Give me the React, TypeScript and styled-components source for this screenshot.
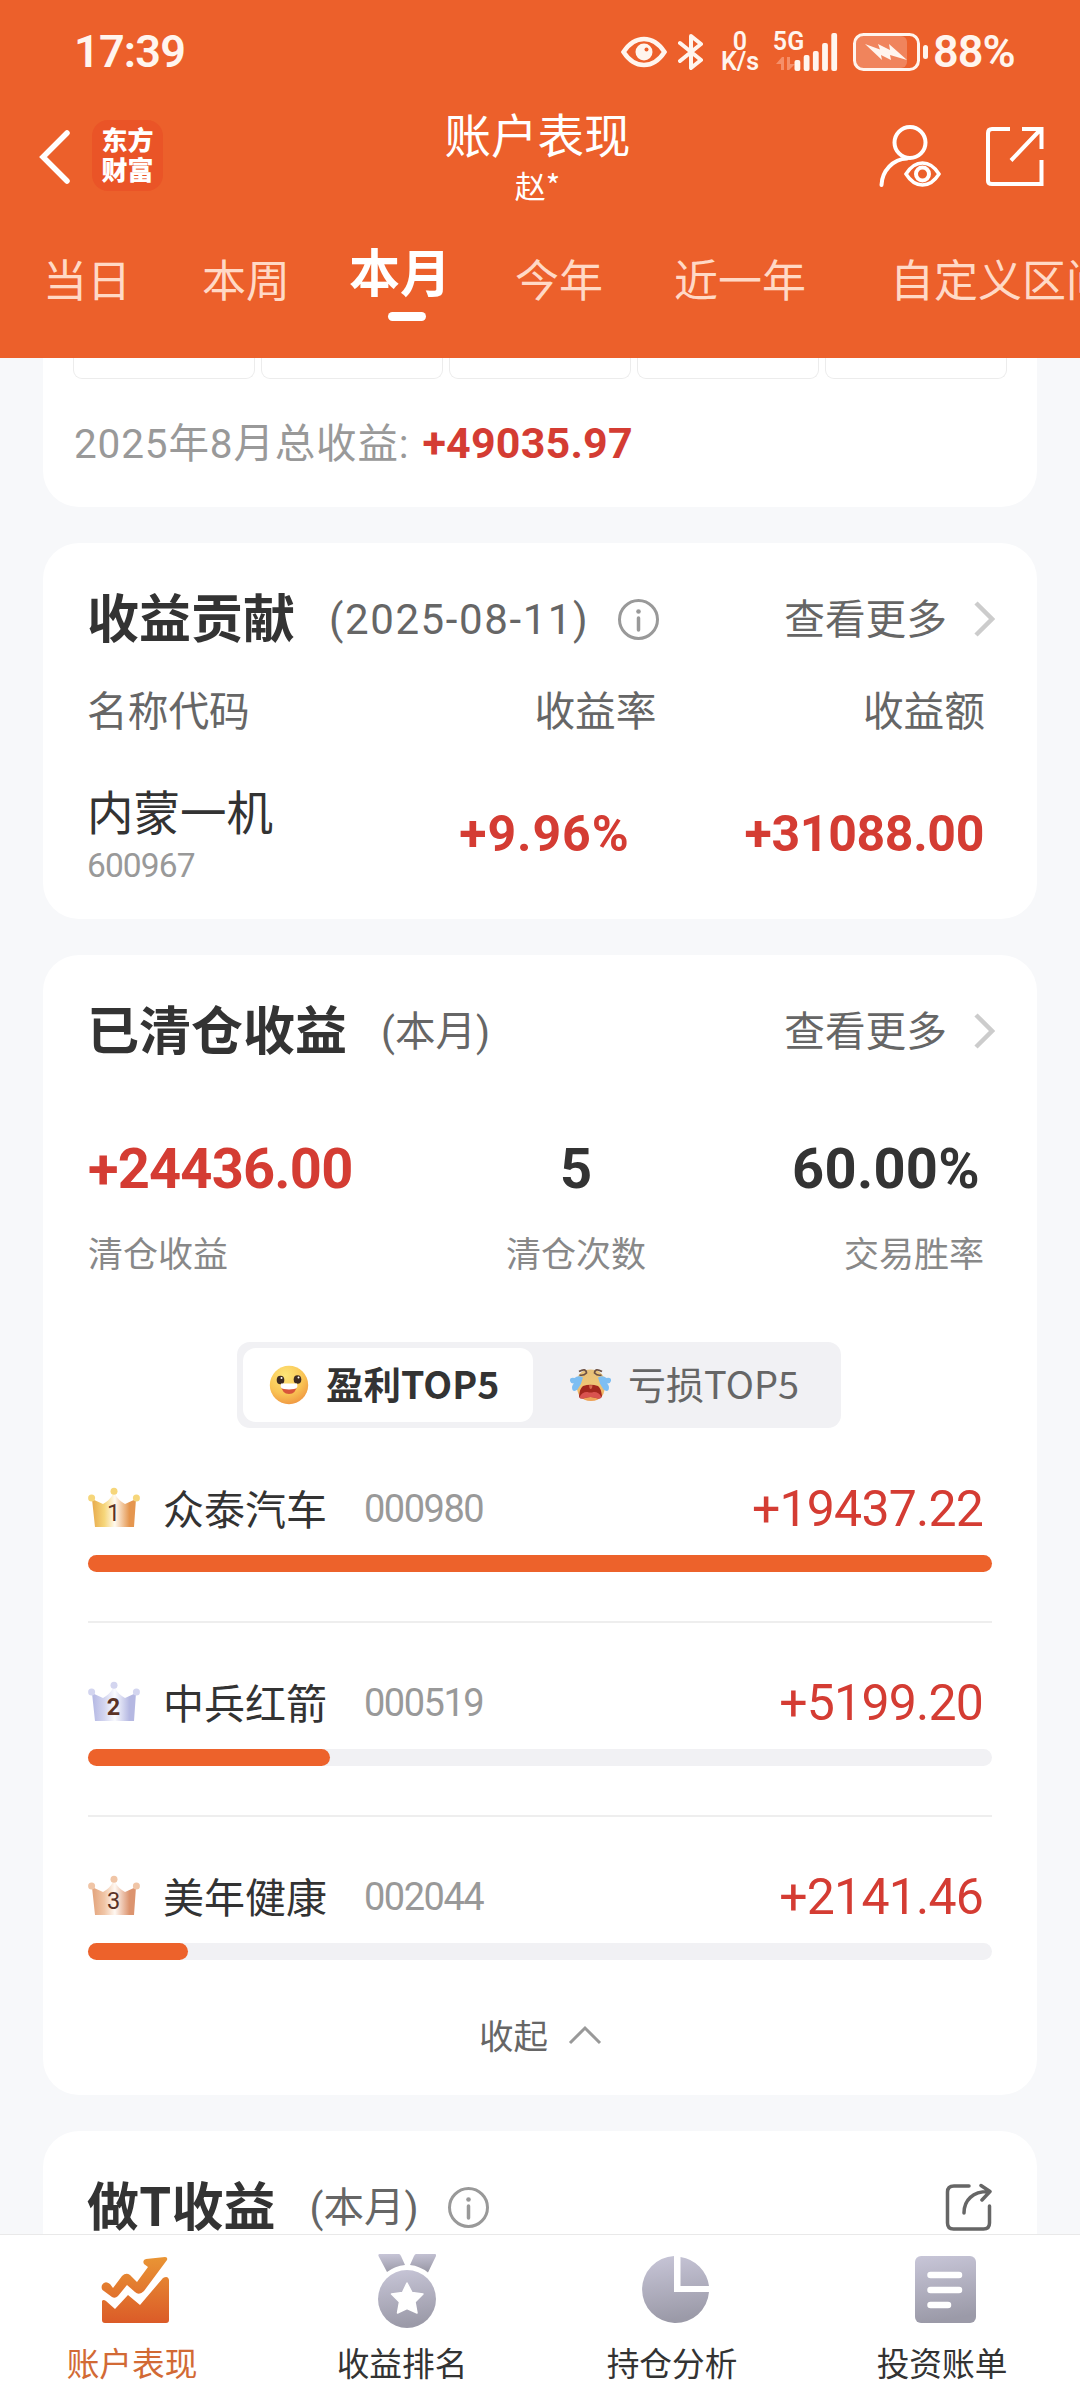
import React from "react";
import styled, { createGlobalStyle } from "styled-components";

const CJK = `"Noto Sans CJK SC", sans-serif`;
const NUM = `Roboto, "Noto Sans CJK SC", sans-serif`;
const ORANGE = "#ec602b";
const RED = "#d43c33";

const GlobalStyle = createGlobalStyle`
  * { box-sizing: border-box; }
  body { margin: 0; background: #f7f8fa; font-family: ${CJK}; }
  svg { display: block; flex: none; }
`;

const Screen = styled.div`
  width: 1080px;
  height: 2400px;
  overflow: hidden;
  display: flex;
  flex-direction: column;
  background: #f7f8fa;
`;

/* ---------- header ---------- */

const Header = styled.header`
  height: 358px;
  flex: none;
  background: ${ORANGE};
  color: #fff;
  overflow: hidden;
`;

const StatusBar = styled.div`
  height: 103px;
  display: flex;
  align-items: center;
  padding: 0 66px 0 74px;
  color: #fff5ee;
  font-family: ${NUM};
  font-weight: 600;
`;

const Clock = styled.span`
  font-size: 45px;
  line-height: 52px;
  letter-spacing: -0.8px;
  margin-right: auto;
`;

const StackedLabel = styled.div<{ $ml: number; $w: number }>`
  display: flex;
  flex-direction: column;
  align-items: center;
  width: ${(p) => p.$w}px;
  margin-left: ${(p) => p.$ml}px;
  font-size: 25px;
  line-height: 20px;
  white-space: nowrap;
`;

const BatteryText = styled.span`
  font-size: 45px;
  line-height: 52px;
  letter-spacing: -1px;
  margin-left: 4px;
  width: 81px;
  white-space: nowrap;
`;

const TitleBar = styled.div`
  height: 108px;
  display: grid;
  grid-template-columns: 400px 275px 1fr;
  align-items: center;
`;

const TitleLeft = styled.div`
  display: flex;
  align-items: center;
  gap: 22px;
  padding-left: 39px;
`;

const AppLogo = styled.div`
  width: 71px;
  height: 71px;
  margin-top: -3px;
  border-radius: 16px;
  background: #ea5427;
  display: flex;
  flex-direction: column;
  align-items: center;
  justify-content: center;
  font-size: 26px;
  font-weight: 900;
  line-height: 30px;
  padding-bottom: 3px;
`;

const TitleCenter = styled.div`
  display: flex;
  flex-direction: column;
  align-items: center;
`;

const PageTitle = styled.h1`
  margin: -2px 0 0;
  font-size: 46.5px;
  font-weight: 400;
  line-height: 58px;
`;

const Owner = styled.div`
  font-size: 31px;
  line-height: 46px;
`;

const TitleRight = styled.div`
  display: flex;
  align-items: center;
  justify-content: flex-end;
  gap: 45px;
  padding: 0 36px 2px 0;
`;

const Tabs = styled.nav`
  height: 147px;
  display: flex;
  align-items: flex-start;
  white-space: nowrap;
`;

const Tab = styled.div<{ $ml: number; $active?: boolean }>`
  flex: none;
  display: flex;
  flex-direction: column;
  align-items: center;
  margin-left: ${(p) => p.$ml}px;
  padding-top: ${(p) => (p.$active ? 27 : 35)}px;
  font-size: ${(p) => (p.$active ? 51 : 44)}px;
  line-height: 64px;
  font-weight: ${(p) => (p.$active ? 700 : 400)};
  color: ${(p) => (p.$active ? "#fff" : "#ffd9c6")};
`;

const TabMark = styled.span`
  width: 38px;
  height: 9px;
  margin: 10px 0 0 14px;
  border-radius: 5px;
  background: #fff;
`;

/* ---------- cards ---------- */

const Content = styled.main`
  height: 1876px;
  flex: none;
  overflow: hidden;
  padding: 0 43px;
  display: flex;
  flex-direction: column;
  gap: 36px;
`;

const Card = styled.section<{ $h: number; $open?: boolean }>`
  flex: none;
  height: ${(p) => p.$h}px;
  background: #fff;
  border-radius: ${(p) => (p.$open ? "0 0 36px 36px" : "36px")};
  padding: ${(p) => (p.$open ? "0 30px" : "36px 45px 0")};
`;

const DayCells = styled.div`
  display: grid;
  grid-template-columns: repeat(5, 182px);
  gap: 6px;
`;

const DayCell = styled.div`
  height: 21px;
  border: 1px solid #ececec;
  border-top: 0;
  border-radius: 0 0 9px 9px;
`;

const TotalLine = styled.div`
  display: flex;
  align-items: center;
  height: 60px;
  margin-top: 35px;
  padding-left: 1px;
  gap: 13px;
`;

const TotalLabel = styled.span`
  font-size: 40.5px;
  letter-spacing: 0.85px;
  line-height: 60px;
  color: #999;
  font-family: ${NUM};
`;

const Num = styled.span<{ $size: number; $ls?: number; $bold?: boolean; $color?: string }>`
  font-family: ${NUM};
  font-size: ${(p) => p.$size}px;
  letter-spacing: ${(p) => p.$ls ?? 0}px;
  font-weight: ${(p) => (p.$bold ? 700 : 400)};
  color: ${(p) => p.$color ?? "#333"};
  line-height: 1.2;
  white-space: nowrap;
`;

const CardHead = styled.div`
  display: flex;
  align-items: center;
  height: 80px;
`;

const CardTitle = styled.h2`
  margin: -6px 0 0 -1px;
  font-size: 52px;
  font-weight: 700;
  line-height: 76px;
  color: #333;
  white-space: nowrap;
`;

const Period = styled.span<{ $size?: number; $ls?: number }>`
  margin: 2px 0 0 34px;
  font-family: ${NUM};
  font-size: ${(p) => p.$size ?? 42}px;
  letter-spacing: ${(p) => p.$ls ?? 0}px;
  line-height: 76px;
  color: #666;
  white-space: nowrap;
`;

const IconSlot = styled.span<{ $ml: number | "auto" }>`
  margin-left: ${(p) => (p.$ml === "auto" ? "auto" : `${p.$ml}px`)};
`;

const More = styled.span`
  margin-left: auto;
  display: flex;
  align-items: center;
  gap: 26px;
  font-size: 40.7px;
  line-height: 68px;
  color: #666;
`;

const MoreText = styled.span`
  margin-top: -4px;
`;

const TableRow = styled.div<{ $h: number; $mt: number }>`
  display: grid;
  grid-template-columns: 300px 1fr 1fr;
  align-items: center;
  height: ${(p) => p.$h}px;
  margin: ${(p) => p.$mt}px 0 0 -1px;
`;

const HeadCell = styled.div<{ $pr?: number; $right?: boolean }>`
  font-size: 40.7px;
  line-height: 60px;
  color: #666;
  text-align: ${(p) => (p.$right ? "right" : "left")};
  padding-right: ${(p) => p.$pr ?? 0}px;
`;

const ValueCell = styled.div<{ $pr: number }>`
  text-align: right;
  padding-right: ${(p) => p.$pr}px;
`;

const StockCell = styled.div`
  display: flex;
  flex-direction: column;
  gap: 8px;
`;

const StockName = styled.span<{ $size: number }>`
  font-size: ${(p) => p.$size}px;
  line-height: 56px;
  color: #333;
  white-space: nowrap;
`;

const Stats = styled.div`
  display: grid;
  grid-template-columns: 320px 1fr 240px;
  height: 142px;
  margin-top: 65px;
  padding-right: 8px;
`;

const Stat = styled.div<{ $align: string }>`
  display: flex;
  flex-direction: column;
  align-items: ${(p) => p.$align};
  gap: 24px;
  white-space: nowrap;
`;

const StatLabel = styled.span`
  font-size: 35px;
  line-height: 50px;
  color: #888;
`;

const Segmented = styled.div`
  display: flex;
  width: 604px;
  height: 86px;
  margin: 64px 0 0 149px;
  padding: 6px;
  border-radius: 13px;
  background: #f1f1f4;
`;

const Segment = styled.div<{ $active?: boolean; $gap: number; $pl: number }>`
  width: 290px;
  height: 74px;
  display: flex;
  align-items: center;
  gap: ${(p) => p.$gap}px;
  padding-left: ${(p) => p.$pl}px;
  border-radius: 13px;
  background: ${(p) => (p.$active ? "#fff" : "transparent")};
  color: ${(p) => (p.$active ? "#333" : "#666")};
  font-weight: ${(p) => (p.$active ? 700 : 400)};
  font-size: ${(p) => (p.$active ? 37.5 : 38)}px;
  line-height: 66px;
  white-space: nowrap;
`;

const SegmentText = styled.span`
  margin-top: -4px;
`;

const RankList = styled.div`
  padding-top: 49px;
`;

const RankItem = styled.div<{ $first: boolean }>`
  height: ${(p) => (p.$first ? 144 : 194)}px;
  padding-top: ${(p) => (p.$first ? 0 : 48)}px;
  border-top: ${(p) => (p.$first ? "none" : "2px solid #eee")};
`;

const RankRow = styled.div`
  display: flex;
  align-items: center;
  height: 60px;
`;

const RankName = styled(StockName)`
  margin-left: 23px;
  margin-right: 37px;
`;

const RankCode = styled(Num)`
  margin-top: 5px;
`;

const RankAmount = styled(Num)`
  margin: 4px 9px 0 auto;
`;

const Track = styled.div`
  height: 17px;
  margin-top: 18px;
  border-radius: 9px;
  background: #f1f1f4;
`;

const TrackFill = styled.div`
  height: 17px;
  border-radius: 9px;
  background: #ed622b;
`;

const Collapse = styled.div`
  display: flex;
  align-items: center;
  gap: 20px;
  padding-left: 391px;
  font-size: 34.5px;
  line-height: 50px;
  color: #666;
`;

/* ---------- bottom navigation ---------- */

const BottomNav = styled.footer`
  flex: none;
  height: 166px;
  border-top: 1px solid #e9e9e9;
  background: #fff;
  display: grid;
  grid-template-columns: repeat(4, 270px);
`;

const NavItem = styled.div<{ $active?: boolean }>`
  display: flex;
  flex-direction: column;
  align-items: center;
  padding-top: 18px;
  color: ${(p) => (p.$active ? "#d26a35" : "#333")};
`;

const NavLabel = styled.span`
  margin: 7px 6px 0 0;
  font-size: 32.7px;
  line-height: 48px;
`;

/* ---------- icons ---------- */

const EyeIcon = () => (
  <svg width="46" height="32" viewBox="0 0 46 32">
    <path d="M2.500 16C9 6 16 3 23 3s14 3 20.500 13C37 26 30 29 23 29S9 26 2.500 16Z" fill="none" stroke="#fff5ee" strokeWidth="4.500" />
    <circle cx="23" cy="16" r="8.500" fill="#fff5ee" />
    <circle cx="25.500" cy="13.500" r="2" fill={ORANGE} />
  </svg>
);

const BluetoothIcon = () => (
  <svg width="26" height="38" viewBox="0 0 26 38" style={{ marginLeft: 11 }}>
    <path d="M2 10 23 27 13 35V3l10 8L2 28" fill="none" stroke="#fff5ee" strokeWidth="4" strokeLinejoin="round" strokeLinecap="round" />
  </svg>
);

const DataArrows = () => (
  <svg width="20" height="14" viewBox="0 0 20 14" style={{ marginTop: 5, alignSelf: "flex-start" }}>
    <path d="M0 7 6 0h2v13H5V7ZM11 0h3v7h5l-6 6h-2Z" fill="#f58f69" />
  </svg>
);

const SignalBars = () => (
  <svg width="44" height="38" viewBox="0 0 44 38" style={{ marginLeft: -7 }}>
    {[27, 22, 18, 10, 0].map((y, i) => (
      <rect key={i} x={0.5 + i * 9.2} y={y} width="5.800" height={38 - y} rx="2" fill="#fff5ee" />
    ))}
  </svg>
);

const BatteryIcon = () => (
  <svg width="76" height="38" viewBox="0 0 76 38" style={{ marginLeft: 15 }}>
    <rect x="3" y="3" width="51" height="32" rx="6" fill="#f0845c" />
    <rect x="1.500" y="1.500" width="64" height="35" rx="9" fill="none" stroke="#fff5ee" strokeWidth="3" />
    <path d="M12 11 27 16.500 25 11l12 6-1-6 18 16-17-5 1 5-10-5 1 5Z" fill="#fff5ee" />
    <rect x="70" y="12" width="5" height="14" rx="2.500" fill="#fff5ee" />
  </svg>
);

const BackIcon = () => (
  <svg width="31" height="54" viewBox="0 0 31 54">
    <path d="M28 3 4 27l24 24" fill="none" stroke="#fff" strokeWidth="5.500" strokeLinecap="round" strokeLinejoin="miter" />
  </svg>
);

const PersonEyeIcon = () => (
  <svg width="62" height="62" viewBox="0 0 62 62" fill="none" stroke="#fff" strokeWidth="4">
    <circle cx="31" cy="17.500" r="15.500" />
    <path d="M2.500 60C3 46 14 34 28 33.500" strokeLinecap="round" />
    <path d="M27 49C32 41 38 38 43.500 38S55 41 60 49c-5 8-11 11-16.500 11S32 57 27 49Z" strokeWidth="3.500" />
    <circle cx="43.500" cy="49" r="6.500" strokeWidth="4" />
  </svg>
);

const ExportIcon = () => (
  <svg width="58" height="60" viewBox="0 0 58 60" fill="none" stroke="#fff" strokeWidth="4">
    <path d="M24 3H6Q2 3 2 7v48q0 3 4 3h49.500V34" />
    <path d="M36 3h19.500v20M55 3 25 34.500" />
  </svg>
);

const InfoIcon = () => (
  <svg width="41" height="41" viewBox="0 0 41 41">
    <circle cx="20.500" cy="20.500" r="19" fill="none" stroke="#999" strokeWidth="3" />
    <path d="M20.500 19v12" stroke="#999" strokeWidth="3.500" strokeLinecap="round" />
    <circle cx="20.500" cy="12.500" r="2.300" fill="#999" />
  </svg>
);

const ChevronRight = () => (
  <svg width="22" height="36" viewBox="0 0 22 36" style={{ marginRight: -3 }}>
    <path d="M3 2 19 18 3 34" fill="none" stroke="#ccc" strokeWidth="4.500" />
  </svg>
);

const ChevronUp = () => (
  <svg width="34" height="21" viewBox="0 0 34 21">
    <path d="M2 19 17 4l15 15" fill="none" stroke="#999" strokeWidth="3" />
  </svg>
);

const ShareIcon = () => (
  <svg width="47" height="48" viewBox="0 0 47 48" fill="none" stroke="#666" strokeWidth="3.500" strokeLinecap="round" strokeLinejoin="round">
    <path d="M24 3H9Q2.500 3 2.500 9v31q0 6 6 6h30q6 0 6-6V23" />
    <path d="M19 30C19 17 28 8.500 43 8.500M36 2.500l9 6-8 8.500" />
  </svg>
);

const SmileIcon = () => (
  <svg width="40" height="40" viewBox="0 0 40 40">
    <defs>
      <radialGradient id="smile" cx="0.4" cy="0.25" r="0.8">
        <stop offset="0" stopColor="#fde577" />
        <stop offset="0.6" stopColor="#f9c455" />
        <stop offset="1" stopColor="#ef9440" />
      </radialGradient>
    </defs>
    <circle cx="20" cy="20" r="19.200" fill="url(#smile)" />
    <ellipse cx="11.500" cy="15" rx="3.800" ry="4.300" fill="#3d2a21" />
    <ellipse cx="28.500" cy="14.500" rx="3.800" ry="4.300" fill="#3d2a21" />
    <circle cx="12.500" cy="13" r="1" fill="#fff" />
    <circle cx="29.500" cy="12.500" r="1" fill="#fff" />
    <path d="M12 20h16q-1 9-8 9t-8-9Z" fill="#d8553a" />
    <path d="M12 18.500h16q1.500 5-3 5.500-5 .8-10 0-4.500-.5-3-5.500Z" fill="#fff" />
  </svg>
);

const CryIcon = () => (
  <svg width="44" height="34" viewBox="0 0 44 34">
    <defs>
      <linearGradient id="cry" x1="0" y1="0" x2="0" y2="1">
        <stop offset="0" stopColor="#e6c079" />
        <stop offset="0.5" stopColor="#efc676" />
        <stop offset="1" stopColor="#eda055" />
      </linearGradient>
    </defs>
    <path d="M7.500 14Q9 1.500 21.500 1.500T36 14q1 19-14 19T7.500 14Z" fill="url(#cry)" />
    <path d="M10 3.500q7-4 7.500 1.500-3 3-7 2M33 3.500q-7-4-7.500 1.500 3 3 7 2" stroke="#6d5145" strokeWidth="1.700" fill="none" />
    <path d="M14 9.500Q9 7 5.500 10 .5 9 1 13q1 3 4 2.500Q2 18 3.500 22q2 2 5-.5 4-5 5.500-12ZM29 9.500q5-2.500 8.500.5 5-1 4.500 3-1 3-4 2.500 3 2.500 1.500 6.500-2 2-5-.5-4-5-5.500-12Z" fill="#7dbef2" />
    <path d="M14 18q7.500-2.500 15 0 3 2 4 10-.5 3-4 2.500-7.500-3-15 0-4 .5-4-2.500 1-8 4-10Z" fill="#a3271d" />
    <path d="M10.500 29q3-5.500 8-5 3 1 6 0 5-.5 8 5-1 2-4 1.500-7-3-14 0-3 .5-4-1.500Z" fill="#d9534f" />
    <path d="M20 17.200h3.500L23 20q-1.500 2-2.500 0Z" fill="#d96a50" />
  </svg>
);

const CROWNS = [
  ["#e7aa4c", "#f6d67a", "#fffaf0", "#e5964f"],
  ["#b3b7e3", "#d3d5ef", "#fafbff", "#b5b8e2"],
  ["#e2a27a", "#f0c5a6", "#fff8f2", "#dc946f"],
];

const CrownIcon = ({ rank }: { rank: number }) => {
  const [a, b, c, d] = CROWNS[rank - 1];
  return (
    <svg width="52" height="41" viewBox="0 0 52 41">
      <defs>
        <linearGradient id={`crown${rank}`} x1="0" x2="1" y1="0" y2="0">
          <stop offset="0" stopColor={a} />
          <stop offset="0.28" stopColor={b} />
          <stop offset="0.52" stopColor={c} />
          <stop offset="0.85" stopColor={d} />
          <stop offset="1" stopColor={d} />
        </linearGradient>
      </defs>
      <path d="M4 12 15 17Q22 13 25 7h2q3 6 10 10L48 12 46 40H7Z" fill={`url(#crown${rank})`} />
      <circle cx="3.600" cy="11" r="3.500" fill={b} />
      <circle cx="26" cy="4.200" r="3.500" fill={b} />
      <circle cx="48.400" cy="11" r="3.500" fill={b} />
      <text x="25.500" y="34" textAnchor="middle" fontFamily="Roboto, sans-serif" fontSize="23.500" fontWeight={rank === 2 ? 700 : 400} fill="#5b3327">
        {rank}
      </text>
    </svg>
  );
};

const GreyGradient = ({ id }: { id: string }) => (
  <defs>
    <linearGradient id={id} x1="0" y1="0" x2="0.15" y2="1">
      <stop offset="0" stopColor="#c8c6d8" />
      <stop offset="1" stopColor="#9b9aa8" />
    </linearGradient>
  </defs>
);

const ChartIcon = () => (
  <svg width="68" height="78" viewBox="0 0 68 78">
    <defs>
      <linearGradient id="trend" x1="0" y1="0" x2="0" y2="70" gradientUnits="userSpaceOnUse">
        <stop offset="0" stopColor="#ea9835" />
        <stop offset="1" stopColor="#db5b28" />
      </linearGradient>
    </defs>
    <g fill="url(#trend)">
      <path d="M1.500 37Q0 35 1 32 4 27 9 31l3 4 9-12q4-4 8-1l7 7 11-15-4-3q-2-4 2-5L64 4q3 0 2 3L43 38q-5 5-9 1l-8-7-9 11q-3 3-6 1Z" />
      <path d="M2 47q2 0 3 1l9 8 13-14 12 10L62 25q5-3 6 2v40q0 3-3 3H4q-3 0-3-3V48Z" />
    </g>
  </svg>
);

const MedalIcon = () => (
  <svg width="58" height="78" viewBox="0 0 58 78" style={{ marginLeft: 3 }}>
    <GreyGradient id="medal" />
    <g fill="url(#medal)">
      <path d="M1.500 1H21q1 0 2 2l4 9Q17 13 9 19L.5 3Q0 1 1.500 1ZM38 1h19q1.500 0 1 2l-8 16.500Q42 13 32 12l4-9q1-2 2-2Z" />
      <circle cx="29" cy="46" r="29" />
    </g>
    <path d="m29 30 5 9.500 11 1.500-8 8 2 11-10-4.500L19.500 60l2-11-8-8 11-1.500Z" fill="#fff" stroke="#fff" strokeWidth="1.500" strokeLinejoin="round" />
  </svg>
);

const PieIcon = () => (
  <svg width="68" height="78" viewBox="0 0 68 78" style={{ marginLeft: 2 }}>
    <GreyGradient id="pie" />
    <path d="M32 3v36h35A33.500 33.500 0 1 1 32 3ZM38.500 4A34 34 0 0 1 67 33H38.500Z" fill="url(#pie)" />
  </svg>
);

const BillIcon = () => (
  <svg width="61" height="78" viewBox="0 0 61 78">
    <GreyGradient id="bill" />
    <rect y="3" width="61" height="67" rx="6" fill="url(#bill)" />
    <path d="M15.500 22H44M15.500 37H44M15.500 52H33" stroke="#fff" strokeWidth="6.500" strokeLinecap="round" />
  </svg>
);

/* ---------- data ---------- */

const TABS = [
  { label: "当日", ml: 43 },
  { label: "本周", ml: 71 },
  { label: "本月", ml: 59, active: true },
  { label: "今年", ml: 64 },
  { label: "近一年", ml: 71 },
  { label: "自定义区间", ml: 84 },
];

const RANKS = [
  { name: "众泰汽车", code: "000980", amount: "+19437.22", width: 904, ls: -0.8 },
  { name: "中兵红箭", code: "000519", amount: "+5199.20", width: 242, ls: -0.8 },
  { name: "美年健康", code: "002044", amount: "+2141.46", width: 100, ls: -0.8 },
];

const NAV = [
  { label: "账户表现", icon: <ChartIcon />, active: true },
  { label: "收益排名", icon: <MedalIcon /> },
  { label: "持仓分析", icon: <PieIcon /> },
  { label: "投资账单", icon: <BillIcon /> },
];

const SeeMore = () => (
  <More>
    <MoreText>查看更多</MoreText>
    <ChevronRight />
  </More>
);

export default function App() {
  return (
    <Screen>
      <GlobalStyle />
      <Header>
        <StatusBar>
          <Clock>17:39</Clock>
          <EyeIcon />
          <BluetoothIcon />
          <StackedLabel $ml={16} $w={40}>
            <span>0</span>
            <span>K/s</span>
          </StackedLabel>
          <StackedLabel $ml={16} $w={25}>
            <span>5G</span>
            <DataArrows />
          </StackedLabel>
          <SignalBars />
          <BatteryIcon />
          <BatteryText>88%</BatteryText>
        </StatusBar>
        <TitleBar>
          <TitleLeft>
            <BackIcon />
            <AppLogo>
              <span>东方</span>
              <span>财富</span>
            </AppLogo>
          </TitleLeft>
          <TitleCenter>
            <PageTitle>账户表现</PageTitle>
            <Owner>赵*</Owner>
          </TitleCenter>
          <TitleRight>
            <PersonEyeIcon />
            <ExportIcon />
          </TitleRight>
        </TitleBar>
        <Tabs>
          {TABS.map((t) => (
            <Tab key={t.label} $ml={t.ml} $active={t.active}>
              {t.label}
              {t.active && <TabMark />}
            </Tab>
          ))}
        </Tabs>
      </Header>

      <Content>
        <Card $h={149} $open>
          <DayCells>
            {[0, 1, 2, 3, 4].map((i) => (
              <DayCell key={i} />
            ))}
          </DayCells>
          <TotalLine>
            <TotalLabel>2025年8月总收益:</TotalLabel>
            <Num $size={43} $ls={0.2} $bold $color={RED}>+49035.97</Num>
          </TotalLine>
        </Card>

        <Card $h={376}>
          <CardHead>
            <CardTitle>收益贡献</CardTitle>
            <Period $ls={1.6}>(2025-08-11)</Period>
            <IconSlot $ml={29}>
              <InfoIcon />
            </IconSlot>
            <SeeMore />
          </CardHead>
          <TableRow $h={60} $mt={20}>
            <HeadCell>名称代码</HeadCell>
            <HeadCell $right $pr={33}>收益率</HeadCell>
            <HeadCell $right $pr={7}>收益额</HeadCell>
          </TableRow>
          <TableRow $h={110} $mt={40}>
            <StockCell>
              <StockName $size={46.5}>内蒙一机</StockName>
              <Num $size={33.5} $ls={-0.9} $color="#999">600967</Num>
            </StockCell>
            <ValueCell $pr={60}>
              <Num $size={50} $ls={0.9} $bold $color={RED}>+9.96%</Num>
            </ValueCell>
            <ValueCell $pr={8}>
              <Num $size={50} $ls={-0.35} $bold $color={RED}>+31088.00</Num>
            </ValueCell>
          </TableRow>
        </Card>

        <Card $h={1140}>
          <CardHead>
            <CardTitle>已清仓收益</CardTitle>
            <Period $size={40.5}>(本月)</Period>
            <SeeMore />
          </CardHead>
          <Stats>
            <Stat $align="flex-start">
              <Num $size={56} $ls={-0.8} $bold $color={RED}>+24436.00</Num>
              <StatLabel>清仓收益</StatLabel>
            </Stat>
            <Stat $align="center">
              <Num $size={56} $bold>5</Num>
              <StatLabel>清仓次数</StatLabel>
            </Stat>
            <Stat $align="flex-end">
              <Num $size={56} $ls={0.3} $bold style={{ marginRight: 4 }}>60.00%</Num>
              <StatLabel>交易胜率</StatLabel>
            </Stat>
          </Stats>
          <Segmented>
            <Segment $active $gap={17} $pl={26}>
              <SmileIcon />
              <SegmentText>盈利TOP5</SegmentText>
            </Segment>
            <Segment $gap={15} $pl={36}>
              <CryIcon />
              <SegmentText>亏损TOP5</SegmentText>
            </Segment>
          </Segmented>
          <RankList>
            {RANKS.map((r, i) => (
              <RankItem key={r.code} $first={i === 0}>
                <RankRow>
                  <CrownIcon rank={i + 1} />
                  <RankName $size={41}>{r.name}</RankName>
                  <RankCode $size={38} $ls={-1.5} $color="#999">{r.code}</RankCode>
                  <RankAmount $size={50} $ls={r.ls} $color={RED}>{r.amount}</RankAmount>
                </RankRow>
                <Track>
                  <TrackFill style={{ width: r.width }} />
                </Track>
              </RankItem>
            ))}
          </RankList>
          <Collapse>
            收起
            <ChevronUp />
          </Collapse>
        </Card>

        <Card $h={200}>
          <CardHead>
            <CardTitle>做T收益</CardTitle>
            <Period $size={40.5}>(本月)</Period>
            <IconSlot $ml={30}>
              <InfoIcon />
            </IconSlot>
            <IconSlot $ml="auto">
              <ShareIcon />
            </IconSlot>
          </CardHead>
        </Card>
      </Content>

      <BottomNav>
        {NAV.map((n) => (
          <NavItem key={n.label} $active={n.active}>
            {n.icon}
            <NavLabel>{n.label}</NavLabel>
          </NavItem>
        ))}
      </BottomNav>
    </Screen>
  );
}
